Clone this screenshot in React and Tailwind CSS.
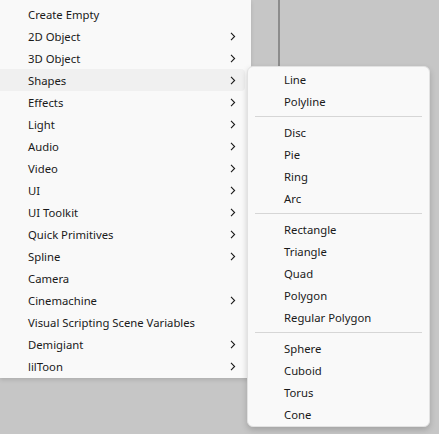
import React from "react";

const main = [
  ["Create Empty", false],
  ["2D Object", true],
  ["3D Object", true],
  ["Shapes", true, true],
  ["Effects", true],
  ["Light", true],
  ["Audio", true],
  ["Video", true],
  ["UI", true],
  ["UI Toolkit", true],
  ["Quick Primitives", true],
  ["Spline", true],
  ["Camera", false],
  ["Cinemachine", true],
  ["Visual Scripting Scene Variables", false],
  ["Demigiant", true],
  ["lilToon", true],
];

const groups = [
  ["Line", "Polyline"],
  ["Disc", "Pie", "Ring", "Arc"],
  ["Rectangle", "Triangle", "Quad", "Polygon", "Regular Polygon"],
  ["Sphere", "Cuboid", "Torus", "Cone"],
];

function Chevron() {
  return (
    <svg width="6" height="9" viewBox="0 0 6 9" className="block">
      <path d="M1 0.8 L4.6 4.5 L1 8.2" fill="none" stroke="#1b1b1b" strokeWidth="1.1" />
    </svg>
  );
}

export default function App() {
  const font = { fontFamily: '"Noto Sans", "Open Sans", sans-serif' };
  return (
    <div className="relative w-[439px] h-[434px] bg-[#c6c6c6] overflow-hidden text-[11.3px] text-[#1a1a1a]" style={font}>
      <div className="absolute left-[278px] top-0 h-[80px] w-[2px] bg-[#8c8c8c]" />
      <div className="relative w-[251px] bg-[#f9f9f9] pt-[3px] pb-[1px] pr-[6px] shadow-[0_2px_4px_rgba(0,0,0,0.12)]">
        {main.map(([label, sub, active]) => (
          <div
            key={label}
            className={`flex items-center h-[22px] pl-[28px] pr-[9px] rounded-r-[4px] ${active ? "bg-[#f0f0f0]" : ""}`}
          >
            <span className="flex-1 leading-none pt-[2px]">{label}</span>
            {sub && <Chevron />}
          </div>
        ))}
      </div>
      <div className="absolute left-[247px] top-[66px] w-[183px] bg-[#f9f9f9] border border-[#e2e2e2] rounded-[6px] py-[1px] shadow-[0_3px_6px_rgba(0,0,0,0.18)]">
        {groups.map((g, i) => (
          <div key={i}>
            {i > 0 && (
              <div className="h-[9px] flex items-center px-[7px]">
                <div className="h-px w-full bg-[#d6d6d6]" />
              </div>
            )}
            {g.map((l) => (
              <div key={l} className="flex items-center h-[22px] pl-[36px] leading-none pt-[2px]">
                {l}
              </div>
            ))}
          </div>
        ))}
      </div>
    </div>
  );
}
